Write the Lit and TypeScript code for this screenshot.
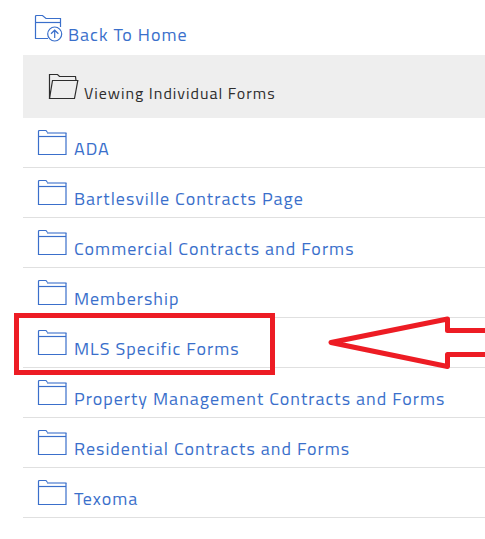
import { LitElement, html, svg, css, nothing } from "lit";
import { customElement, property } from "lit/decorators.js";

type IconKind = "folder" | "open" | "up";

const art = {
  folder: svg`<path d="M9.5 3.5L8 1.5H1.5Q.5 1.5 .5 2.5V25.5H28V4"/><path d="M.5 7.5H28"/><path class="faint" d="M9 4H28.5"/>`,
  open: svg`<path d="M1.5 25.5V1.5H9.5L11.5 3.5H27.5L28 7.5"/><path d="M1.5 25.5L4.5 7.5H29.8L26.5 25.5Z"/>`,
  up: svg`<path d="M14 23.5H1.5V1.5Q1.5 .5 2.5 .5H8.5L12 3.5H26.5V12"/><path d="M1.5 7.5H26.5"/><circle cx="20.7" cy="19" r="7"/><path d="M20.7 23V15.5M17 18.7L20.7 15.2L24.4 18.7"/>`,
};

@customElement("folder-icon")
class FolderIcon extends LitElement {
  @property() kind: IconKind = "folder";

  static styles = css`
    :host { display: inline-block; flex: none; width: 32px; height: 27px; }
    .icon { display: block; overflow: visible; fill: none; stroke: currentColor; stroke-width: 1.2; }
    .faint { stroke-width: 2; opacity: 0.55; }
  `;

  render() {
    return html`<svg class="icon" width="32" height="27" viewBox="0 0 32 27" aria-hidden="true">${art[this.kind]}</svg>`;
  }
}

@customElement("app-root")
class AppRoot extends LitElement {
  static styles = css`
    :host {
      display: block;
      overflow-x: hidden;
      padding: 0 0 20px 23px;
      background: #fff;
      color: #3a6fcb;
      font: 18px/24px "Titillium Web", "Noto Sans", sans-serif;
      letter-spacing: 1px;
    }
    .link { display: flex; align-items: flex-end; gap: 4px; color: inherit; text-decoration: none; }
    .home { height: 41px; padding: 6px 0 8px 11px; gap: 2px; }
    .current {
      display: flex;
      align-items: flex-end;
      gap: 4px;
      height: 63px;
      box-sizing: border-box;
      margin: 0;
      padding: 0 0 13px 25px;
      background: #eee;
      color: #2d2d2d;
      font-size: 16px;
      font-weight: 400;
    }
    .list { list-style: none; margin: 0; padding: 0; }
    .row { position: relative; border-bottom: 1px solid #e0e0e0; }
    .entry { height: 43px; padding: 0 0 6px 15px; }
    .picture { margin-bottom: 5px; }
    .frame {
      position: absolute;
      z-index: 1;
      top: -5px;
      left: -9px;
      width: 261px;
      height: 62px;
      box-sizing: border-box;
      border: 5px solid #ed1c24;
      pointer-events: none;
    }
    .arrow {
      position: absolute;
      z-index: 1;
      top: -3px;
      left: 304px;
      fill: none;
      stroke: #ed1c24;
      stroke-width: 5;
      stroke-linejoin: round;
      pointer-events: none;
    }
  `;

  private folders = [
    { name: "ADA" },
    { name: "Bartlesville Contracts Page" },
    { name: "Commercial Contracts and Forms" },
    { name: "Membership" },
    { name: "MLS Specific Forms", marked: true },
    { name: "Property Management Contracts and Forms" },
    { name: "Residential Contracts and Forms" },
    { name: "Texoma" },
  ];

  private marker() {
    return html`
      <span class="frame"></span>
      <svg class="arrow" width="158" height="56" viewBox="0 0 158 56" aria-hidden="true">
        <path d="M160 15.5H120.5V4L4 27.5L120.5 51.5V39.5H160" />
      </svg>
    `;
  }

  render() {
    return html`
      <nav>
        <a class="link home" href="#home"><folder-icon class="picture" kind="up"></folder-icon><span>Back To Home</span></a>
      </nav>
      <h1 class="current"><folder-icon class="picture" kind="open"></folder-icon><span>Viewing Individual Forms</span></h1>
      <ul class="list">
        ${this.folders.map(
          (f) => html`<li class="row">
            <a class="link entry" href="#folder"><folder-icon class="picture"></folder-icon><span>${f.name}</span></a>
            ${f.marked ? this.marker() : nothing}
          </li>`
        )}
      </ul>
    `;
  }
}
